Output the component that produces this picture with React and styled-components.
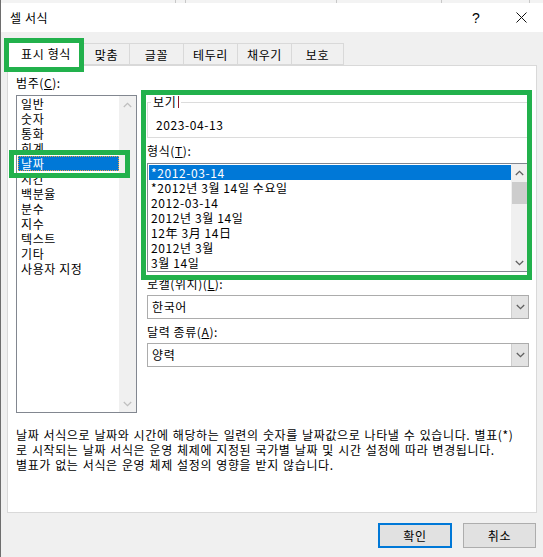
import styled, { createGlobalStyle } from 'styled-components';

const GlobalStyle = createGlobalStyle`
  html, body {
    margin: 0;
    padding: 0;
    background: #f0f0f0;
  }
  * {
    box-sizing: border-box;
  }
`;

const Window = styled.div`
  position: relative;
  width: 543px;
  height: 557px;
  overflow: hidden;
  background: #f0f0f0;
  border-left: 1px solid #6e6e6e;
  font-family: "Noto Sans CJK KR", "Noto Sans", sans-serif;
  font-size: 12px;
  letter-spacing: 0.6px;
  color: #000;
`;

// 뒤에 깔린 엑셀 격자 일부
const GridStrip = styled.div`
  height: 3px;
  background-color: #f3f3f3;
  background-image:
    linear-gradient(#c8c8c8, #c8c8c8),
    linear-gradient(#c8c8c8, #c8c8c8),
    linear-gradient(#c8c8c8, #c8c8c8),
    linear-gradient(#c8c8c8, #c8c8c8),
    linear-gradient(#c8c8c8, #c8c8c8);
  background-size: 1px 3px;
  background-repeat: no-repeat;
  background-position: 174px 0, 184px 0, 335px 0, 440px 0, 528px 0;
`;

const TitleBar = styled.div`
  height: 29px;
  background: #fff;
  display: flex;
  align-items: center;
  padding-left: 9px;
`;

const TitleText = styled.span`
  line-height: 16px;
  flex: 1;
`;

const CaptionButton = styled.div`
  width: ${p => p.w}px;
  height: 29px;
  display: flex;
  align-items: center;
  justify-content: center;
  font-family: "Liberation Sans", sans-serif;
  font-size: 14px;
  letter-spacing: 0;
`;

const TabRow = styled.div`
  height: 33px;
  display: flex;
  align-items: flex-end;
  padding-left: 7px;
`;

const Tab = styled.div`
  position: relative;
  width: ${p => p.w}px;
  height: ${p => (p.active ? 26 : 22)}px;
  margin-bottom: ${p => (p.active ? -1 : 0)}px;
  z-index: ${p => (p.active ? 1 : 0)};
  background: ${p => (p.active ? '#fff' : '#f0f0f0')};
  border: 1px solid #d9d9d9;
  border-bottom: ${p => (p.active ? 'none' : '1px solid #d9d9d9')};
  border-left: ${p => (p.first ? '1px solid #d9d9d9' : 'none')};
  display: flex;
  align-items: center;
  justify-content: center;
  line-height: 16px;
  padding-top: ${p => (p.active ? 0 : 1)}px;
`;

const Panel = styled.div`
  margin-left: 6px;
  width: 530px;
  height: 448px;
  background: #fff;
  border: 1px solid #d9d9d9;
  padding: 9px 7px 0 8px;
`;

const TopSection = styled.div`
  display: flex;
  gap: 10px;
`;

const LeftColumn = styled.div`
  width: 121px;
  display: flex;
  flex-direction: column;
`;

const RightColumn = styled.div`
  flex: 1;
  display: flex;
  flex-direction: column;
`;

const Label = styled.div`
  line-height: 16px;
  height: 16px;
  margin-top: ${p => p.mt || 0}px;
  white-space: nowrap;
`;

const ListBox = styled.div`
  margin-top: ${p => p.mt || 0}px;
  height: ${p => p.h}px;
  border: 1px solid #828790;
  background: #fff;
  display: flex;
`;

const ListItems = styled.div`
  flex: 1;
  padding: ${p => p.pt || 0}px 0 0 1px;
  overflow: hidden;
`;

const ListItem = styled.div`
  height: 15px;
  line-height: 15px;
  padding-left: ${p => p.pl}px;
  white-space: nowrap;
  background: ${p => (p.selected ? '#0078d7' : 'transparent')};
  color: ${p => (p.selected ? '#fff' : '#000')};
  outline: ${p => (p.focus ? '1px dotted #f2a23a' : 'none')};
  outline-offset: -1px;
`;

const ScrollTrack = styled.div`
  width: 17px;
  background: #f0f0f0;
  display: flex;
  flex-direction: column;
  justify-content: space-between;
  align-items: center;
`;

const ScrollArrow = styled.div`
  height: 17px;
  width: 17px;
  display: flex;
  align-items: center;
  justify-content: center;
`;

const ScrollThumb = styled.div`
  width: 15px;
  height: 22px;
  background: #cdcdcd;
`;

const ScrollMiddle = styled.div`
  flex: 1;
  width: 100%;
  display: flex;
  justify-content: center;
  padding-top: ${p => p.pt || 0}px;
`;

const GroupBox = styled.fieldset`
  margin: 20px 0 0 0;
  padding: 0 8px 4px 8px;
  border: 1px solid #dcdcdc;
  min-width: 0;
`;

const GroupLegend = styled.legend`
  padding: 0 2px;
  margin-left: -5px;
  line-height: 14px;
  display: flex;
  align-items: center;
`;

const Caret = styled.span`
  display: inline-block;
  width: 1px;
  height: 12px;
  margin-left: 2px;
  background: #8b1c2c;
`;

const PreviewValue = styled.div`
  padding-top: 8px;
  line-height: 16px;
`;

const Combo = styled.div`
  margin-top: 3px;
  height: 24px;
  border: 1px solid #acacac;
  background: #fff;
  display: flex;
`;

const ComboText = styled.div`
  flex: 1;
  padding-left: 4px;
  line-height: 22px;
`;

const ComboButton = styled.div`
  width: 17px;
  background: #e3e3e3;
  border-left: 1px solid #cfcfcf;
  display: flex;
  align-items: center;
  justify-content: center;
`;

const Description = styled.div`
  margin-top: 14px;
`;

const DescLine = styled.div`
  line-height: 15px;
  white-space: nowrap;
  word-spacing: 1px;
`;

const ButtonRow = styled.div`
  margin-top: 10px;
  display: flex;
  justify-content: flex-end;
  gap: 11px;
  padding-right: 7px;
`;

const Button = styled.div`
  width: ${p => p.w}px;
  height: 25px;
  background: #e1e1e1;
  border: ${p => (p.primary ? '2px solid #0078d7' : '1px solid #adadad')};
  display: flex;
  align-items: center;
  justify-content: center;
  line-height: 16px;
`;

// 스크린샷 위의 초록 강조 표시
const Highlight = styled.div`
  position: absolute;
  left: ${p => p.x - 1}px;
  top: ${p => p.y}px;
  width: ${p => p.w}px;
  height: ${p => p.h}px;
  border: 5px solid #22b14c;
  pointer-events: none;
  z-index: 5;
`;

const Chevron = ({ dir = 'up', color = '#606060' }) => (
  <svg width="9" height="6" viewBox="0 0 9 6">
    <path
      d={dir === 'up' ? 'M0.8 5 L4.5 1.3 L8.2 5' : 'M0.8 1 L4.5 4.7 L8.2 1'}
      fill="none"
      stroke={color}
      strokeWidth="1.3"
    />
  </svg>
);

const tabs = [
  { label: '표시 형식', w: 76 },
  { label: '맞춤', w: 46 },
  { label: '글꼴', w: 54 },
  { label: '테두리', w: 54 },
  { label: '채우기', w: 54 },
  { label: '보호', w: 52 },
];

const categories = [
  '일반', '숫자', '통화', '회계', '날짜', '시간', '백분율',
  '분수', '지수', '텍스트', '기타', '사용자 지정',
];

const formats = [
  '*2012-03-14',
  '*2012년 3월 14일 수요일',
  '2012-03-14',
  '2012년 3월 14일',
  '12年 3月 14日',
  '2012년 3월',
  '3월 14일',
];

export default function App() {
  return (
    <>
      <GlobalStyle />
      <Window>
        <GridStrip />
        <TitleBar>
          <TitleText>셀 서식</TitleText>
          <CaptionButton w={46}>?</CaptionButton>
          <CaptionButton w={44}>
            <svg width="11" height="11" viewBox="0 0 11 11">
              <path d="M0.5 0.5 L10.5 10.5 M10.5 0.5 L0.5 10.5" stroke="#111" strokeWidth="1" />
            </svg>
          </CaptionButton>
        </TitleBar>

        <TabRow>
          {tabs.map((t, i) => (
            <Tab key={t.label} w={t.w} active={i === 0} first={i === 0}>
              {t.label}
            </Tab>
          ))}
        </TabRow>

        <Panel>
          <TopSection>
            <LeftColumn>
              <Label>범주(<u>C</u>):</Label>
              <ListBox mt={4} h={318}>
                <ListItems>
                  {categories.map(c => (
                    <ListItem key={c} pl={3} selected={c === '날짜'} focus={c === '날짜'}>
                      {c}
                    </ListItem>
                  ))}
                </ListItems>
                <ScrollTrack>
                  <ScrollArrow><Chevron dir="up" color="#bfbfbf" /></ScrollArrow>
                  <ScrollArrow><Chevron dir="down" color="#bfbfbf" /></ScrollArrow>
                </ScrollTrack>
              </ListBox>
            </LeftColumn>

            <RightColumn>
              <GroupBox>
                <GroupLegend>보기<Caret /></GroupLegend>
                <PreviewValue>2023-04-13</PreviewValue>
              </GroupBox>

              <Label mt={5}>형식(<u>T</u>):</Label>
              <ListBox mt={4} h={109}>
                <ListItems pt={1}>
                  {formats.map((f, i) => (
                    <ListItem key={f} pl={2} selected={i === 0}>
                      {f}
                    </ListItem>
                  ))}
                </ListItems>
                <ScrollTrack>
                  <ScrollArrow><Chevron dir="up" /></ScrollArrow>
                  <ScrollMiddle pt={1}>
                    <ScrollThumb />
                  </ScrollMiddle>
                  <ScrollArrow><Chevron dir="down" /></ScrollArrow>
                </ScrollTrack>
              </ListBox>

              <Label mt={4}>로캘(위치)(<u>L</u>):</Label>
              <Combo>
                <ComboText>한국어</ComboText>
                <ComboButton><Chevron dir="down" /></ComboButton>
              </Combo>

              <Label mt={5}>달력 종류(<u>A</u>):</Label>
              <Combo>
                <ComboText>양력</ComboText>
                <ComboButton><Chevron dir="down" /></ComboButton>
              </Combo>
            </RightColumn>
          </TopSection>

          <Description>
            <DescLine>날짜 서식으로 날짜와 시간에 해당하는 일련의 숫자를 날짜값으로 나타낼 수 있습니다. 별표(*)</DescLine>
            <DescLine>로 시작되는 날짜 서식은 운영 체제에 지정된 국가별 날짜 및 시간 설정에 따라 변경됩니다.</DescLine>
            <DescLine>별표가 없는 서식은 운영 체제 설정의 영향을 받지 않습니다.</DescLine>
          </Description>
        </Panel>

        <ButtonRow>
          <Button w={74} primary>확인</Button>
          <Button w={73}>취소</Button>
        </ButtonRow>

        <Highlight x={4} y={38} w={80} h={34} />
        <Highlight x={9} y={150} w={121} h={28} />
        <Highlight x={141} y={90} w={391} h={190} />
      </Window>
    </>
  );
}
